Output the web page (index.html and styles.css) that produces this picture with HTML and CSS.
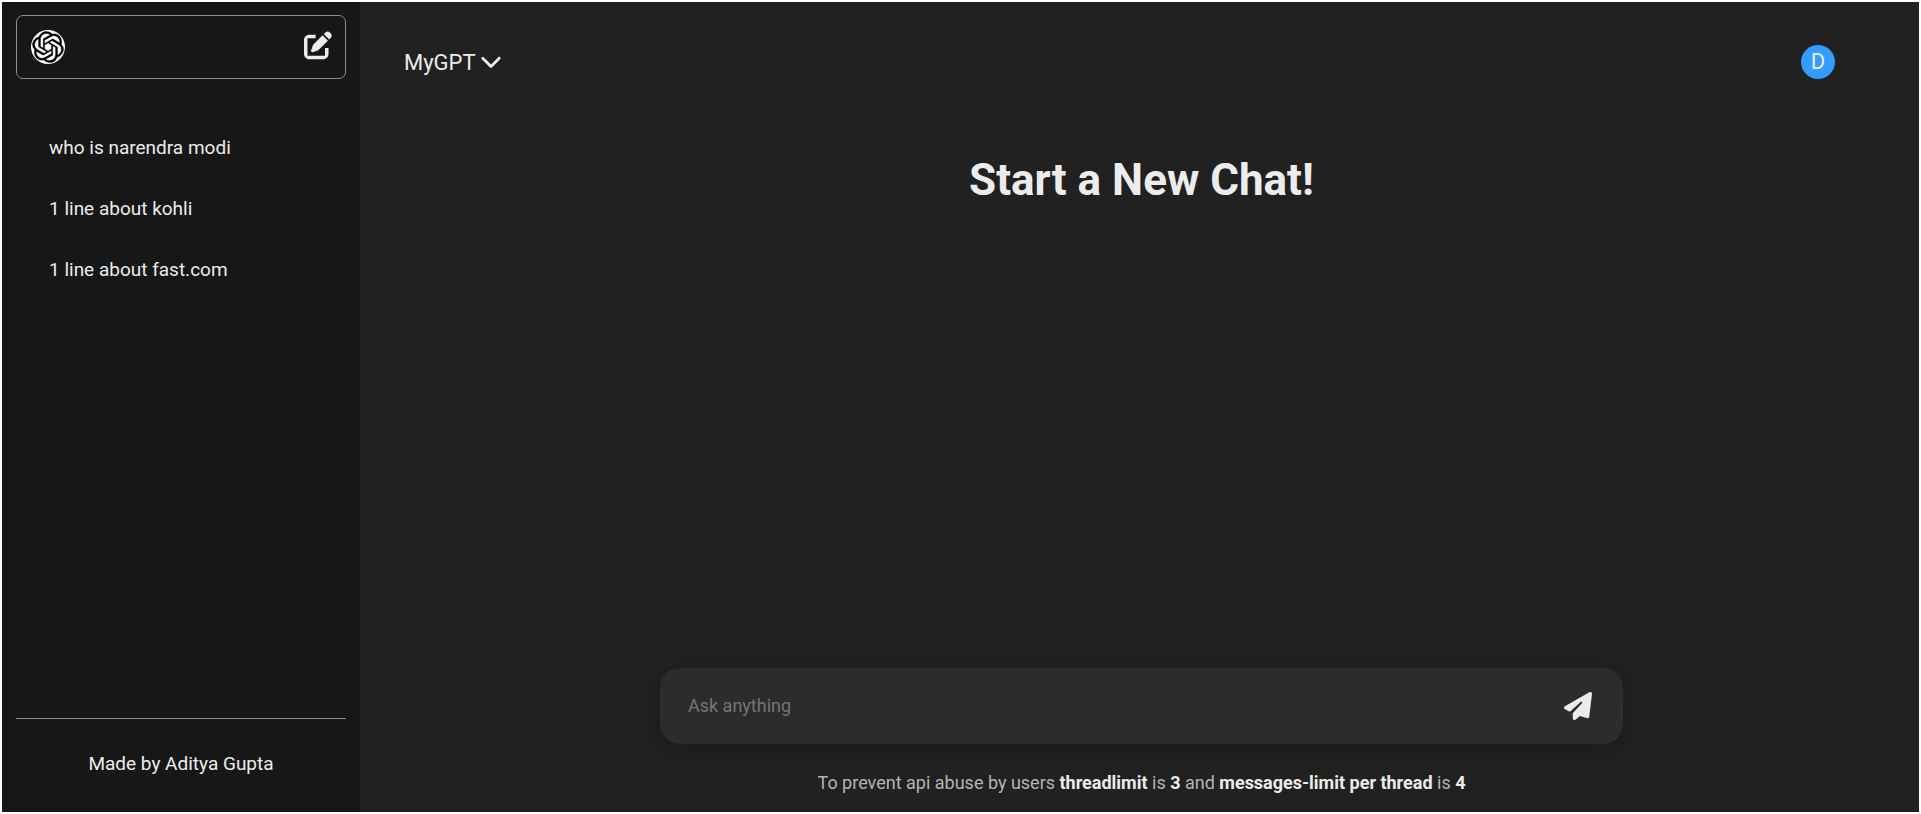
FILE: index.html
```html
<!DOCTYPE html>
<html lang="en">
<head>
<meta charset="utf-8">
<title>MyGPT</title>
<link rel="stylesheet" href="styles.css">
</head>
<body>
<div class="app">
  <aside class="sidebar">
    <button class="new-chat" type="button" aria-label="New chat">
      <svg class="logo" viewBox="0 0 34 34" aria-hidden="true">
        <circle cx="17" cy="17" r="17" fill="#fff"/>
        <path transform="translate(1.4 1.4) scale(1.3)" fill="#000" stroke="#000" stroke-width=".2" d="M22.2819 9.8211a5.9847 5.9847 0 0 0-.5157-4.9108 6.0462 6.0462 0 0 0-6.5098-2.9A6.0651 6.0651 0 0 0 4.9807 4.1818a5.9847 5.9847 0 0 0-3.9977 2.9 6.0462 6.0462 0 0 0 .7427 7.0966 5.98 5.98 0 0 0 .511 4.9107 6.051 6.051 0 0 0 6.5146 2.9001A5.9847 5.9847 0 0 0 13.2599 24a6.0557 6.0557 0 0 0 5.7718-4.2058 5.9894 5.9894 0 0 0 3.9977-2.9001 6.0557 6.0557 0 0 0-.7475-7.0729zm-9.022 12.6081a4.4755 4.4755 0 0 1-2.8764-1.0408l.1419-.0804 4.7783-2.7582a.7948.7948 0 0 0 .3927-.6813v-6.7369l2.02 1.1686a.071.071 0 0 1 .038.052v5.5826a4.504 4.504 0 0 1-4.4945 4.4944zm-9.6607-4.1254a4.4708 4.4708 0 0 1-.5346-3.0137l.142.0852 4.783 2.7582a.7712.7712 0 0 0 .7806 0l5.8428-3.3685v2.3324a.0804.0804 0 0 1-.0332.0615L9.74 19.9502a4.4992 4.4992 0 0 1-6.1408-1.6464zM2.3408 7.8956a4.485 4.485 0 0 1 2.3655-1.9728V11.6a.7664.7664 0 0 0 .3879.6765l5.8144 3.3543-2.0201 1.1685a.0757.0757 0 0 1-.071 0l-4.8303-2.7865A4.504 4.504 0 0 1 2.3408 7.872zm16.5963 3.8558L13.1038 8.364 15.1192 7.2a.0757.0757 0 0 1 .071 0l4.8303 2.7913a4.4944 4.4944 0 0 1-.6765 8.1042v-5.6772a.79.79 0 0 0-.407-.667zm2.0107-3.0231l-.142-.0852-4.7735-2.7818a.7759.7759 0 0 0-.7854 0L9.409 9.2297V6.8974a.0662.0662 0 0 1 .0284-.0615l4.8303-2.7866a4.4992 4.4992 0 0 1 6.6802 4.66zM8.3065 12.863l-2.02-1.1638a.0804.0804 0 0 1-.038-.0567V6.0742a4.4992 4.4992 0 0 1 7.3757-3.4537l-.142.0805L8.704 5.459a.7948.7948 0 0 0-.3927.6813zm1.0976-2.3654l2.602-1.4998 2.6069 1.4998v2.9994l-2.5974 1.4997-2.6067-1.4997Z"/>
      </svg>
      <svg class="icon" viewBox="0 32 512 512" aria-hidden="true" overflow="visible"><path d="M471.6 21.7c-21.9-21.9-57.3-21.9-79.2 0L362.3 51.7l97.9 97.9 30.1-30.1c21.9-21.9 21.9-57.3 0-79.2L471.6 21.7zm-299.2 220c-6.1 6.1-10.8 13.6-13.5 21.9l-29.6 88.8c-2.9 8.6-.6 18.1 5.8 24.6s15.9 8.7 24.6 5.8l88.8-29.6c8.2-2.7 15.7-7.4 21.9-13.5L437.7 172.3 339.7 74.3 172.4 241.7zM96 64C43 64 0 107 0 160V416c0 53 43 96 96 96H352c53 0 96-43 96-96V304H384V448H64V128H212V64H96z"/></svg>
    </button>
    <ul class="history">
      <li><a href="#">who is narendra modi</a></li>
      <li><a href="#">1 line about kohli</a></li>
      <li><a href="#">1 line about fast.com</a></li>
    </ul>
    <p class="credit">Made by Aditya Gupta</p>
  </aside>
  <main class="chat">
    <header class="topbar">
      <button class="model" type="button">MyGPT
        <svg class="chevron" viewBox="0 0 512 512" aria-hidden="true"><path d="M233.4 406.6c12.5 12.5 32.8 12.5 45.3 0l192-192c12.5-12.5 12.5-32.8 0-45.3s-32.8-12.5-45.3 0L256 338.7 86.6 169.4c-12.5-12.5-32.8-12.5-45.3 0s-12.5 32.8 0 45.3l192 192z"/></svg>
      </button>
      <button class="avatar" type="button">D</button>
    </header>
    <h1 class="title">Start a New Chat!</h1>
    <form class="composer">
      <input class="prompt" type="text" placeholder="Ask anything" aria-label="Ask anything">
      <button class="send" type="button" aria-label="Send">
        <svg class="icon" viewBox="0 0 512 512" aria-hidden="true"><path d="M498.1 5.6c10.1 7 15.4 19.1 13.5 31.2l-50 416c-1.5 9.7-7.4 18.2-16 23s-18.9 5.4-28 1.6L290 440l-74.500 62c-8.900 9.700-22.900 12.900-35.200 8.100S160 493.200 160 480V396.400c0-4 1.500-7.800 4.200-10.700L331.800 202.800c5.800-6.300 5.600-16-.4-22s-15.700-6.400-22-.7L106 360.800 17.700 316.600C7.100 311.300 .3 300.700 0 288.900s5.900-22.800 16.100-28.700l448-256c10.700-6.100 23.900-5.500 34 1.400z"/></svg>
      </button>
    </form>
    <p class="note">To prevent api abuse by users <b>threadlimit</b> is <b>3</b> and <b>messages-limit per thread</b> is <b>4</b></p>
  </main>
</div>
</body>
</html>
```
FILE: styles.css
```css
* {
  box-sizing: border-box;
}

body {
  margin: 0;
  background: #fff;
  color: #ececec;
  font-family: Roboto, "Liberation Sans", sans-serif;
  font-size: 19px;
  line-height: 24px;
}

button {
  padding: 0;
  border: 0;
  background: none;
  color: inherit;
  font: inherit;
  cursor: pointer;
}

.app {
  display: flex;
  min-height: 100vh;
  border: 2px solid #fff;
}

.sidebar {
  display: flex;
  flex-direction: column;
  flex: 0 0 358px;
  padding: 13px 14px 0;
  background: #171717;
}

.new-chat {
  display: flex;
  align-items: center;
  justify-content: space-between;
  height: 64px;
  padding: 0 13px 0 14px;
  border: 1px solid #8c8c8c;
  border-radius: 7px;
}

.logo {
  width: 34px;
  height: 34px;
}

.icon {
  display: block;
  width: 28px;
  height: 28px;
  fill: currentColor;
}

.history {
  display: flex;
  flex-direction: column;
  gap: 37px;
  margin: 57px 0 0;
  padding: 0 33px;
  list-style: none;
}

.history a {
  color: inherit;
  text-decoration: none;
}

.credit {
  margin: auto 0 0;
  padding: 33px 0 36px;
  border-top: 1px solid #8c8c8c;
  text-align: center;
}

.chat {
  display: flex;
  flex-direction: column;
  align-items: center;
  flex: 1;
  padding: 43px 0 17px 4px;
  background: #212121;
}

.topbar {
  display: flex;
  align-items: center;
  justify-content: space-between;
  align-self: stretch;
  padding: 0 84px 0 40px;
}

.model {
  display: flex;
  align-items: center;
  gap: 4px;
  padding-top: 2px;
  font-size: 22px;
}

.chevron {
  width: 22px;
  height: 22px;
  margin-bottom: 4px;
  fill: currentColor;
}

.avatar {
  width: 34px;
  height: 34px;
  border-radius: 50%;
  background: #339cff;
  font-size: 22px;
}

.title {
  margin: 74px 0 0;
  font-size: 44px;
  line-height: 54px;
}

.composer {
  display: flex;
  align-items: center;
  width: 62%;
  max-width: 963px;
  height: 76px;
  margin: auto 0 27px;
  padding: 0 31px 0 28px;
  border-radius: 20px;
  background: #2c2c2c;
  box-shadow: 0 4px 20px rgba(0, 0, 0, 0.2);
}

.prompt {
  flex: 1;
  min-width: 0;
  padding: 0;
  border: 0;
  outline: 0;
  background: transparent;
  color: inherit;
  font: inherit;
  font-size: 18px;
}

.prompt::placeholder {
  color: #757575;
}

.note {
  margin: 0;
  color: #b4b4b4;
  font-size: 18px;
}

.note b {
  color: #ececec;
  font-weight: 700;
}
```
